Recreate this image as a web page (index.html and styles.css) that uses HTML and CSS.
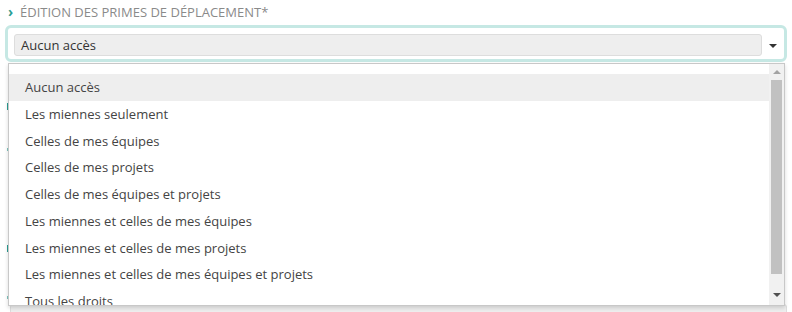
FILE: index.html
```html
<!DOCTYPE html>
<html lang="fr">
<head>
    <meta charset="UTF-8">
    <title>Édition des primes</title>
    <link rel="stylesheet" href="styles.css">
</head>
<body>
    <div class="form">
        <div class="field">
            <div class="label"><span class="chev">›</span>Édition des primes de déplacement*</div>
            <div class="select focused">
                <div class="pill">Aucun accès</div>
                <span class="caret"></span>
            </div>
        </div>
        <!-- fields hidden behind the open list -->
        <div class="under">
            <span class="mark tall"></span>
            <span class="mark dot"></span>
            <span class="mark tall gap"></span>
            <span class="mark dot small"></span>
            <div class="under-pill"></div>
        </div>
    </div>

    <div class="dropdown">
        <ul class="options">
            <li class="active">Aucun accès</li>
            <li>Les miennes seulement</li>
            <li>Celles de mes équipes</li>
            <li>Celles de mes projets</li>
            <li>Celles de mes équipes et projets</li>
            <li>Les miennes et celles de mes équipes</li>
            <li>Les miennes et celles de mes projets</li>
            <li>Les miennes et celles de mes équipes et projets</li>
            <li>Tous les droits</li>
        </ul>
        <div class="scrollbar">
            <span class="arrow up"></span>
            <div class="thumb"></div>
            <span class="arrow down"></span>
        </div>
    </div>
</body>
</html>
```

FILE: styles.css
```css
* {
    margin: 0;
    padding: 0;
    box-sizing: border-box;
}
body {
    font-family: "Open Sans", Arial, sans-serif;
    background-color: #fff;
    color: #444;
    overflow: hidden;
}
.form {
    padding: 3px 5px 0 5px;
}
.label {
    font-size: 13px;
    line-height: 17px;
    text-transform: uppercase;
    color: #8a8a8a;
    padding-left: 3px;
    height: 22px;
}
.chev {
    color: #2a9d92;
    font-weight: bold;
    font-size: 14px;
    display: inline-block;
    width: 12px;
}
.select {
    display: flex;
    align-items: center;
    border: 3px solid #c6e8e4;
    border-radius: 6px;
    padding: 5px 0 3px 6px;
    height: 37px;
}
.pill {
    flex: 1;
    height: 22px;
    background-color: #eee;
    border: 1px solid #ddd;
    border-radius: 3px;
    font-size: 13px;
    line-height: 20px;
    color: #333;
    padding-left: 6px;
}
.caret {
    width: 0;
    height: 0;
    border-left: 4px solid transparent;
    border-right: 4px solid transparent;
    border-top: 4px solid #333;
    margin: 2px 7px 0 7px;
}
.under {
    display: flex;
    flex-direction: column;
    align-items: flex-start;
    padding-top: 41px;
}
.mark {
    display: block;
    width: 2px;
    margin-left: 2px;
    background-color: #2a9d92;
}
.mark.tall {
    height: 7px;
}
.mark.dot {
    height: 3px;
    margin-top: 38px;
    opacity: 0.6;
}
.mark.gap {
    margin-top: 94px;
}
.mark.small {
    margin-top: 44px;
}
.under-pill {
    align-self: stretch;
    height: 20px;
    margin: 5px 0 0 5px;
    background-color: #eee;
    border: 1px solid #ddd;
    border-radius: 3px;
}
.dropdown {
    position: absolute;
    top: 63px;
    left: 8px;
    width: 777px;
    height: 243px;
    background-color: #fff;
    border: 1px solid #c8c8c8;
    box-shadow: 0 2px 4px rgba(0, 0, 0, 0.15);
    display: flex;
    overflow: hidden;
}
.options {
    list-style: none;
    flex: 1;
    padding-top: 10px;
}
.options li {
    height: 26.75px;
    line-height: 26.75px;
    font-size: 13px;
    color: #444;
    padding-left: 16px;
    white-space: nowrap;
}
.options li.active {
    background-color: #eee;
}
.scrollbar {
    width: 15px;
    background-color: #f1f1f1;
    display: flex;
    flex-direction: column;
    align-items: center;
}
.arrow {
    width: 0;
    height: 0;
    border-left: 4px solid transparent;
    border-right: 4px solid transparent;
}
.arrow.up {
    border-bottom: 4px solid #a3a3a3;
    margin: 6px 0 6px;
}
.arrow.down {
    border-top: 4px solid #505050;
    margin: 19px 0 0;
}
.thumb {
    width: 11px;
    height: 194px;
    background-color: #c1c1c1;
}
```
